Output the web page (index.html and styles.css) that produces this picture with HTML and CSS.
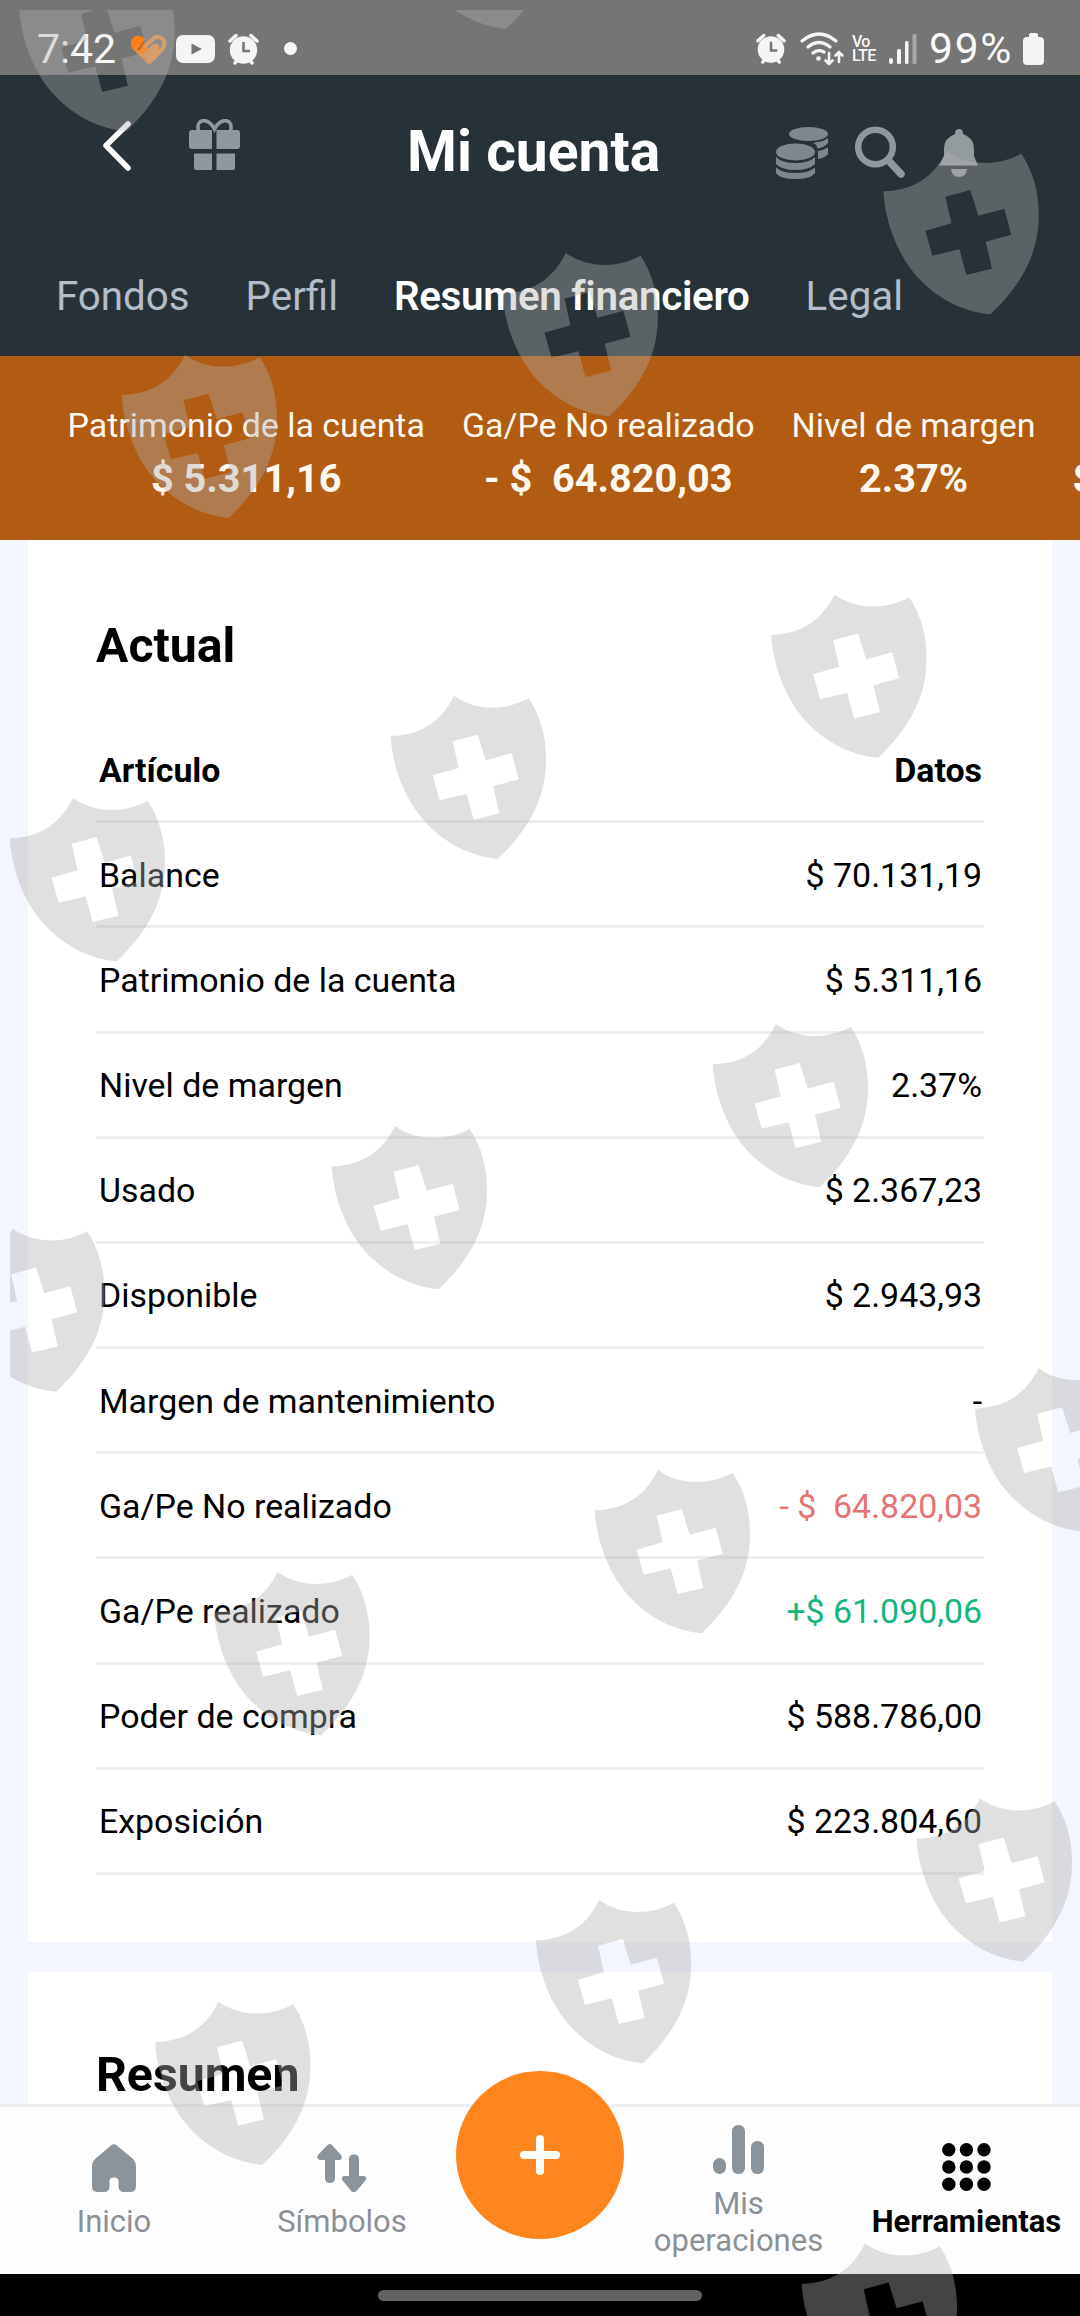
FILE: index.html
```html
<!DOCTYPE html>
<html lang="es">
<head>
<meta charset="utf-8">
<title>Mi cuenta</title>
<link rel="stylesheet" href="styles.css">
</head>
<body>
<div class="screen">
  <header class="status">
    <span class="clock">7:42</span>
    <svg class="st-heart" width="37" height="32" viewBox="0 0 37 32"><path d="M2 14C-2 6 5-1 12 3L15 5L6 18Z" fill="#fb7f14"/><path d="M3 13C6 21 13 24 18 30L22 25L15 8Z" fill="#ee8a33"/><path d="M8 16L14 8" stroke="#c66a20" stroke-width="2.500"/><path d="M14 13L22 6C27 0 36 4 34 11C33 17 27 20 18 29M15 21L23 13C26 10 29 13 26 16L17 25" fill="none" stroke="#ee9343" stroke-width="4.200"/></svg>
    <svg class="st-video" width="39" height="28" viewBox="0 0 39 28"><rect width="39" height="28" rx="7" fill="#f5f5f5"/><path d="M15.500 8.500L26 14L15.500 19.500Z" fill="#757575"/></svg>
    <svg class="st-alarm" width="31" height="32" viewBox="0 0 31 32"><use href="#alarm"/></svg>
    <i class="st-dot"></i>
    <svg class="st-alarm2" width="30" height="31" viewBox="0 0 31 32"><use href="#alarm"/></svg>
    <svg class="st-wifi" width="46" height="34" viewBox="0 0 46 34" fill="none" stroke="#f5f5f5" stroke-width="3.200" stroke-linecap="round"><path d="M2 9Q19-5 36 9M8 15Q19 6 30 15M13 21Q18 17 24 20"/><circle cx="18.500" cy="26.500" r="2.300" fill="#f5f5f5" stroke="none"/><path d="M29 21V32M25.500 28.500L29 32L32.500 28.500M39 30V20M35.500 23.500L39 20L42.500 23.500" stroke-width="2.600"/></svg>
    <span class="lte"><span>Vo</span><span>LTE</span></span>
    <svg class="st-signal" width="28" height="30" viewBox="0 0 28 30" fill="#f5f5f5"><rect y="24" width="4" height="6" rx="2"/><rect x="8" y="15" width="4" height="15" rx="1.500"/><rect x="16" y="7" width="3.500" height="23" rx="1.500"/><rect x="23.500" width="4" height="30" rx="1.500" opacity=".4"/></svg>
    <span class="percent">99%</span>
    <svg class="st-battery" width="21" height="32" viewBox="0 0 21 32" fill="#f5f5f5"><rect x="6" width="9" height="8" rx="2"/><rect y="4" width="21" height="28" rx="4"/></svg>
  </header>

  <section class="top">
    <div class="bar">
      <svg class="i-back" width="32" height="54" viewBox="0 0 32 54"><path d="M27 5L5 26.500L27 49" fill="none" stroke="#fff" stroke-width="5.500" stroke-linecap="round" stroke-linejoin="round"/></svg>
      <svg class="i-gift" width="51" height="51" viewBox="0 0 51 51" fill="#8f979f"><path d="M3 11H23V30H3Q0 30 0 27V14Q0 11 3 11ZM27.500 11H48Q51 11 51 14V27Q51 30 48 30H27.500ZM5 34.500H23V51H7Q5 51 5 49ZM27.500 34.500H46V49Q46 51 44 51H27.500Z"/><path d="M9.500 12C6-1 20-2 25.500 10C31-2 45-1 41.500 12" fill="none" stroke="#8f979f" stroke-width="3.600"/></svg>
      <h1 class="title">Mi cuenta</h1>
      <svg class="i-coins" width="52" height="52" viewBox="0 0 52 52" fill="#7f878e"><ellipse cx="32.500" cy="7" rx="19.500" ry="7"/><path d="M39 15.500Q48 14.500 52 11V16Q48 20.500 41 21.500Q42 18 37 16ZM42 24Q48 23 52 20.500V27Q49 31 42 32Z"/><ellipse cx="19.500" cy="25" rx="19.500" ry="8.500"/><path d="M0 30Q6 36 19.500 36T39 30V37Q33 43 19.500 43T0 37ZM0 40.500Q6 46 19.500 46T39 40.500V46Q35 52 19.500 52T0 46Z"/></svg>
      <svg class="i-search" width="50" height="52" viewBox="0 0 50 52" fill="none" stroke="#8f979f"><circle cx="20.500" cy="21" r="17.300" stroke-width="6.500"/><path d="M33.500 34.500L46 48" stroke-width="7.500" stroke-linecap="round"/></svg>
      <svg class="i-bell" width="40" height="48" viewBox="0 0 40 48" fill="#939b9f"><path d="M20 0Q24 0 24 5Q35 9 35 20V27L39 36.500H0L5 27V20Q5 9 16 5Q16 0 20 0ZM12 40H28Q27 48 20 48T12 40Z"/></svg>
    </div>
    <nav class="tabs"><span class="tab">Fondos</span><span class="tab">Perfil</span><span class="tab on">Resumen financiero</span><span class="tab">Legal</span></nav>
  </section>

  <section class="metrics">
    <div class="metric"><span>Patrimonio de la cuenta</span><b>$ 5.311,16</b></div>
    <div class="metric"><span>Ga/Pe No realizado</span><b>- $&nbsp; 64.820,03</b></div>
    <div class="metric"><span>Nivel de margen</span><b>2.37%</b></div>
    <div class="metric"><b>$</b></div>
  </section>

  <main class="content">
    <section class="card">
      <h2>Actual</h2>
      <div class="table">
        <div class="row head"><span>Artículo</span><span>Datos</span></div>
        <div class="row"><span>Balance</span><span>$ 70.131,19</span></div>
        <div class="row"><span>Patrimonio de la cuenta</span><span>$ 5.311,16</span></div>
        <div class="row"><span>Nivel de margen</span><span>2.37%</span></div>
        <div class="row"><span>Usado</span><span>$ 2.367,23</span></div>
        <div class="row"><span>Disponible</span><span>$ 2.943,93</span></div>
        <div class="row"><span>Margen de mantenimiento</span><span>-</span></div>
        <div class="row"><span>Ga/Pe No realizado</span><span class="loss">- $&nbsp; 64.820,03</span></div>
        <div class="row"><span>Ga/Pe realizado</span><span class="gain">+$ 61.090,06</span></div>
        <div class="row"><span>Poder de compra</span><span>$ 588.786,00</span></div>
        <div class="row"><span>Exposición</span><span>$ 223.804,60</span></div>
      </div>
    </section>
    <section class="card second"><h2>Resumen</h2></section>
  </main>

  <nav class="bottom">
    <div class="item home"><svg width="44" height="48" viewBox="0 0 44 48"><path d="M19 1.500Q22-1 25 1.500L41 15Q44 18 44 22V42Q44 48 38 48H32Q26.500 48 26.500 42V37Q26.500 33.500 22 33.500T17.500 37V42Q17.500 48 12 48H6Q0 48 0 42V22Q0 18 3 15Z" fill="#8b949a"/></svg><span>Inicio</span></div>
    <div class="item symbols"><svg width="50" height="48" viewBox="0 0 50 48" fill="#8b949a"><path d="M10.500 1Q13-1 15 1L24 11Q26 15 23 16H18V34Q18 39 13 39T8 34V16H3Q-1 15 1 11ZM35 48Q37.500 49 39.500 47L48 37Q51 33 47 32H42V15Q42 10.500 37 10.500T32 15V32H27Q23 33 26 37Z"/></svg><span>Símbolos</span></div>
    <button class="fab"><svg width="40" height="40" viewBox="0 0 40 40"><path d="M20 4V36M4 20H36" stroke="#fff" stroke-width="8" stroke-linecap="round"/></svg></button>
    <div class="item trades"><svg width="51" height="49" viewBox="0 0 51 49" fill="#8b949a"><rect y="33" width="13" height="16" rx="6.500"/><rect x="19" width="13" height="49" rx="6"/><rect x="38" y="16" width="13" height="33" rx="6"/></svg><span>Mis<br>operaciones</span></div>
    <div class="item tools"><svg width="49" height="48" viewBox="0 0 49 48"><g id="dots"><circle cx="6.800" cy="6.700" r="6.700"/><circle cx="24.400" cy="6.700" r="6.700"/><circle cx="42" cy="6.700" r="6.700"/></g><use href="#dots" y="17.300"/><use href="#dots" y="34.600"/></svg><span>Herramientas</span></div>
  </nav>
  <footer class="gesture"><i></i></footer>

  <svg class="overlay" width="1080" height="2316" viewBox="0 0 1080 2316">
    <defs>
      <g id="alarm"><path d="M2 8L8 2.500M29 8L23 2.500M7 30L10 26M24 30L21 26" stroke="#f5f5f5" stroke-width="3.500" stroke-linecap="round"/><circle cx="15.500" cy="17" r="13.700" fill="#f5f5f5"/><path d="M15.500 9V18H22" fill="none" stroke="#757575" stroke-width="2.600"/></g>
      <clipPath id="inset"><rect x="10" y="10" width="1070" height="2306"/></clipPath>
      <path id="shield" transform="scale(.3333)" fill-rule="evenodd" d="M0 0C62 44 150 48 224 8C262 65 277 130 276 198C275 330 200 425 131 490C20 478-50 420-94 371C-150 305-185 210-190 121C-90 118-35 70 0 0ZM-4 137L71 117L95 194L173 173L194 251L117 272L136 353L59 372L38 295L-43 314L-64 239L14 217Z"/>
    </defs>
    <g clip-path="url(#inset)" fill="#afafaf" fill-opacity=".388">
      <use href="#shield" x="82.600" y="-32"/><use href="#shield" x="462.500" y="-134.500"/>
      <use href="#shield" x="946.700" y="151"/><use href="#shield" x="565.800" y="253"/><use href="#shield" x="185" y="354.700"/>
      <use href="#shield" x="834.500" y="594.500"/><use href="#shield" x="454" y="695.700"/><use href="#shield" x="73" y="798"/>
      <use href="#shield" x="776" y="1024"/><use href="#shield" x="395" y="1126"/><use href="#shield" x="12.500" y="1228.500"/>
      <use href="#shield" x="1038.500" y="1368.300"/><use href="#shield" x="658" y="1470"/><use href="#shield" x="277.500" y="1572"/>
      <use href="#shield" x="980" y="1798.500"/><use href="#shield" x="599.200" y="1900"/><use href="#shield" x="218.500" y="2001.700"/>
      <use href="#shield" x="865" y="2243.600"/>
    </g>
  </svg>
</div>
</body>
</html>
```
FILE: styles.css
```css
* { box-sizing: border-box; }
body { margin: 0; font-family: Roboto, "Liberation Sans", sans-serif; color: #000; }
svg { display: block; flex: none; }
.screen { position: relative; width: 1080px; height: 2316px; overflow: hidden; display: flex; flex-direction: column; background: #f3f6fe; }
.overlay { position: absolute; inset: 0; pointer-events: none; }

.status { height: 75px; flex: none; display: flex; align-items: flex-start; background: #757575; color: #f8f8f8; border-bottom: 1px solid #6f7375; }
.clock, .percent { flex: none; font-size: 41px; line-height: 40px; padding-top: 29px; white-space: nowrap; }
.clock { width: 93px; margin-left: 37px; }
.st-heart { margin-top: 34px; }
.st-video { margin: 35px 0 0 9px; }
.st-alarm { margin: 33px 0 0 13px; }
.st-dot { flex: none; width: 13px; height: 13px; border-radius: 50%; background: #f8f8f8; margin: 42px 459px 0 25px; }
.st-alarm2 { margin-top: 33px; }
.st-wifi { margin: 32px 0 0 14px; }
.lte { flex: none; width: 28px; margin: 35px 0 0 6px; display: flex; flex-direction: column; font-size: 16px; font-weight: 500; line-height: 14px; letter-spacing: -.6px; }
.st-signal { margin: 34px 0 0 9px; }
.percent { width: 92px; margin-left: 12px; font-size: 42.500px; letter-spacing: 1.800px; }
.st-battery { margin: 33px 0 0 2px; }

.top { height: 281px; flex: none; background: #273238; display: flex; flex-direction: column; }
.bar { height: 180px; display: flex; align-items: flex-start; }
.i-back { margin: 44px 0 0 101px; }
.i-gift { margin: 44px 0 0 56px; }
.title { margin: 43px 0 0 167px; width: 369px; font-size: 57px; line-height: 68px; font-weight: 700; color: #fff; white-space: nowrap; }
.i-coins { margin-top: 52px; }
.i-search { margin: 51px 0 0 27px; }
.i-bell { margin: 54px 0 0 34px; }
.tabs { display: flex; padding: 18px 0 0 56px; font-size: 40.300px; line-height: 48px; color: #b4bdc9; white-space: nowrap; }
.tab { margin-right: 56px; }
.tab.on { color: #fff; font-weight: 600; letter-spacing: -.3px; }

.metrics { height: 184px; flex: none; display: flex; gap: 37px; padding: 48px 0 0 67.500px; background: #b15c12; color: #fff8ee; white-space: nowrap; overflow: hidden; }
.metric { display: flex; flex-direction: column; align-items: center; }
.metric span { font-size: 33.900px; line-height: 44px; }
.metric b { font-size: 39.700px; line-height: 62px; font-weight: 700; }
.metric:last-child { padding-top: 44px; }

.content { flex: none; height: 1564px; padding: 0 28px; overflow: hidden; }
.card { height: 1402px; background: #fff; padding: 76px 68px 0; }
.card h2 { margin: 0; font-size: 48.200px; line-height: 60px; font-weight: 700; }
.second { height: 140px; margin-top: 30px; padding-top: 73px; }
.table { margin-top: 42px; }
.row { height: 105.180px; border-bottom: 3px solid #eee; display: flex; justify-content: space-between; align-items: center; padding: 2px 2px 0 3px; font-size: 33.900px; white-space: pre; }
.head { font-weight: 700; }
.loss { color: #e57373; }
.gain { color: #16b57f; }

.bottom { height: 170px; flex: none; display: flex; background: #fdfdfd; border-top: 3px solid #eceeef; }
.item { display: flex; flex-direction: column; align-items: center; font-size: 31px; line-height: 37px; color: #8b9096; text-align: center; white-space: nowrap; }
.item svg { margin-bottom: 11px; }
.home { width: 228px; padding-top: 37px; }
.symbols { width: 228px; padding-top: 37px; }
.fab { width: 168px; height: 168px; margin: -36px 0 0; padding: 0; border: 0; border-radius: 50%; background: #ff861f; display: flex; align-items: center; justify-content: center; flex: none; }
.trades { width: 228px; padding: 18px 0 0 1px; }
.trades svg { margin-bottom: 11px; }
.tools { width: 228px; padding: 36px 0 0 1px; color: #000; font-weight: 700; }
.tools svg { margin-bottom: 12px; }
.gesture { height: 42px; flex: none; background: #000; padding-top: 16px; }
.gesture i { display: block; width: 324px; height: 11px; margin: 0 auto; border-radius: 6px; background: #616161; }
```
